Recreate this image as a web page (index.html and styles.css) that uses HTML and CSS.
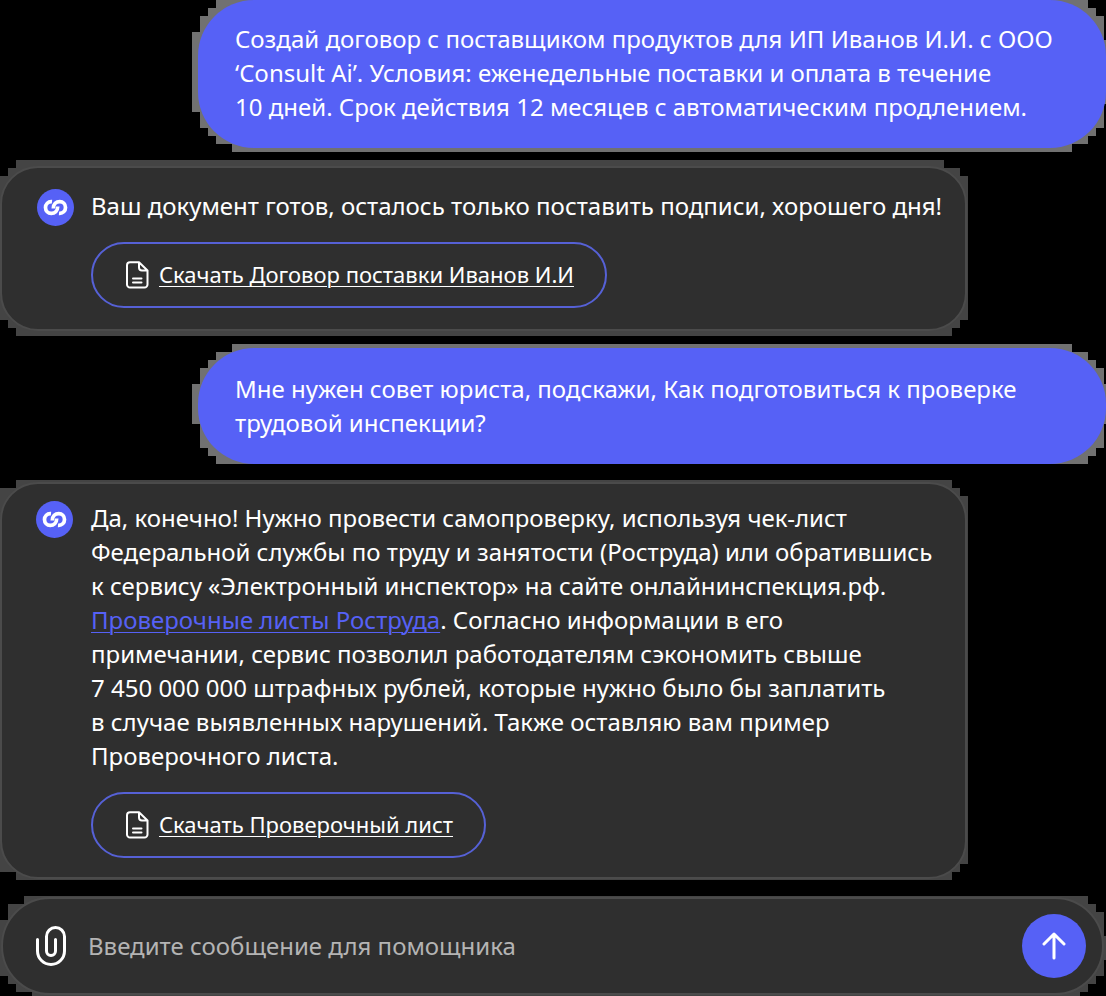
FILE: index.html
```html
<!DOCTYPE html>
<html lang="ru">
<head>
<meta charset="utf-8">
<meta name="viewport" content="width=device-width, initial-scale=1">
<title>Помощник</title>
<link rel="stylesheet" href="styles.css">
</head>
<body>
<svg class="sprite" aria-hidden="true">
  <symbol id="logo" viewBox="0 0 37 37">
    <circle cx="18.5" cy="18.5" r="18.5" fill="#5661f6"/>
    <g fill="none" stroke="#fff" stroke-width="3.7">
      <path d="M15 12.700C11 12.300 8.500 15.200 8.500 18.600C8.500 22 11 24.400 14.200 24.400C17.800 24.400 20.700 22 20.700 17.500"/>
      <path d="M22 24.300C26 24.700 28.500 21.800 28.500 18.400C28.500 15 26 12.600 22.800 12.600C19.200 12.600 16.300 15 16.300 19.500"/>
    </g>
  </symbol>
  <symbol id="file" viewBox="0 0 24 28">
    <g fill="none" stroke="#fff" stroke-width="2" stroke-linecap="round" stroke-linejoin="round">
      <path d="M14 1.200H5A3 3 0 0 0 2 4.200V23.500A3 3 0 0 0 5 26.500H19.500A3 3 0 0 0 22.500 23.500V9.500ZM14 1.200V6.500A3 3 0 0 0 17 9.500H22.500M8 17.500H16.500M8 21.500H16.500"/>
    </g>
  </symbol>
</svg>
<main class="chat">
  <section class="message message-user message-first">
    <p class="bubble">Создай договор с поставщиком продуктов для ИП Иванов И.И. с ООО<br>‘Consult Ai’. Условия: еженедельные поставки и оплата в течение<br>10 дней. Срок действия 12 месяцев с автоматическим продлением.</p>
  </section>

  <section class="message message-bot message-short">
    <div class="card">
      <svg class="avatar" aria-hidden="true"><use href="#logo"/></svg>
      <div class="card-body">
        <p class="text">Ваш документ готов, осталось только поставить подписи, хорошего дня!</p>
        <a class="download" href="#contract"><svg class="file-icon" aria-hidden="true"><use href="#file"/></svg><span class="download-label">Скачать Договор поставки Иванов И.И</span></a>
      </div>
    </div>
  </section>

  <section class="message message-user message-second">
    <p class="bubble">Мне нужен совет юриста, подскажи, Как подготовиться к проверке<br>трудовой инспекции?</p>
  </section>

  <section class="message message-bot message-long">
    <div class="card">
      <svg class="avatar" aria-hidden="true"><use href="#logo"/></svg>
      <div class="card-body">
        <p class="text">Да, конечно! Нужно провести самопроверку, используя чек-лист<br>Федеральной службы по труду и занятости (Роструда) или обратившись<br>к сервису «Электронный инспектор» на сайте онлайнинспекция.рф.<br><a class="link" href="#lists">Проверочные листы Роструда</a>. Согласно информации в его<br>примечании, сервис позволил работодателям сэкономить свыше<br>7 450 000 000 штрафных рублей, которые нужно было бы заплатить<br>в случае выявленных нарушений. Также оставляю вам пример<br>Проверочного листа.</p>
        <a class="download" href="#checklist"><svg class="file-icon" aria-hidden="true"><use href="#file"/></svg><span class="download-label">Скачать Проверочный лист</span></a>
      </div>
    </div>
  </section>

  <form class="composer">
    <div class="composer-bar">
      <button class="attach" type="button" aria-label="Прикрепить файл">
        <svg class="attach-icon" viewBox="0 0 30 40" aria-hidden="true"><path d="M1.500 13.500V25A13.500 13.500 0 0 0 28.500 25V10.500A9 9 0 0 0 10.500 10.500V25A4.500 4.500 0 0 0 19.500 25V13.500" fill="none" stroke="#fff" stroke-width="3" stroke-linecap="round"/></svg>
      </button>
      <input class="field" type="text" placeholder="Введите сообщение для помощника" aria-label="Сообщение">
      <button class="send" type="submit" aria-label="Отправить">
        <svg class="send-icon" viewBox="0 0 24 28" aria-hidden="true"><path d="M12 26V2M2 12L12 2L22 12" fill="none" stroke="#fff" stroke-width="3" stroke-linecap="round" stroke-linejoin="round"/></svg>
      </button>
    </div>
  </form>
</main>
</body>
</html>
```
FILE: styles.css
```css
* { box-sizing: border-box; }

body {
  margin: 0;
  background: #000;
  color: #fff;
  font-family: "Noto Sans", sans-serif;
  font-size: 24px;
  line-height: 34px;
}

p { margin: 0; }

.sprite { position: absolute; width: 0; height: 0; }

.chat { display: flex; flex-direction: column; }

.message, .composer { position: relative; }

/* Stepped backing behind every rounded block */
.message::before, .composer::before {
  content: "";
  position: absolute;
  inset: 0;
  z-index: -1;
  background: #444;
}

.message-user {
  width: calc(100% - 192px);
  align-self: flex-end;
  padding-left: 6px;
}
.message-user::before { background: #717171; }

.bubble {
  padding: 22px 37px 24px;
  border-radius: 56px;
  background: #5661f6;
  white-space: nowrap;
}

.message-first { padding-bottom: 4px; margin-bottom: 8px; }
.message-first::before {
  clip-path: polygon(
    24px 0, calc(100% - 18px) 0, calc(100% - 18px) 8px, calc(100% - 10px) 8px, calc(100% - 10px) 16px,
    calc(100% - 2px) 16px, calc(100% - 2px) 40px, 100% 40px, 100% calc(100% - 48px),
    calc(100% - 2px) calc(100% - 48px), calc(100% - 2px) calc(100% - 24px),
    calc(100% - 10px) calc(100% - 24px), calc(100% - 10px) calc(100% - 16px),
    calc(100% - 18px) calc(100% - 16px), calc(100% - 18px) calc(100% - 8px),
    calc(100% - 34px) calc(100% - 8px), calc(100% - 34px) 100%,
    40px 100%, 40px calc(100% - 8px), 24px calc(100% - 8px), 24px calc(100% - 16px),
    16px calc(100% - 16px), 16px calc(100% - 24px), 8px calc(100% - 24px), 8px calc(100% - 40px),
    0 calc(100% - 40px), 0 32px, 8px 32px, 8px 16px, 16px 16px, 16px 8px, 24px 8px);
}

.message-second { padding-top: 4px; margin: 8px 0 16px; }
.message-second .bubble { padding: 24px 37px; }
.message-second::before {
  clip-path: polygon(
    40px 0, calc(100% - 34px) 0, calc(100% - 34px) 8px, calc(100% - 18px) 8px, calc(100% - 18px) 16px,
    calc(100% - 10px) 16px, calc(100% - 10px) 24px, calc(100% - 2px) 24px, calc(100% - 2px) 40px,
    100% 40px, 100% calc(100% - 40px), calc(100% - 2px) calc(100% - 40px),
    calc(100% - 2px) calc(100% - 16px), calc(100% - 10px) calc(100% - 16px),
    calc(100% - 10px) calc(100% - 8px), calc(100% - 18px) calc(100% - 8px), calc(100% - 18px) 100%,
    24px 100%, 24px calc(100% - 8px), 16px calc(100% - 8px), 16px calc(100% - 16px),
    8px calc(100% - 16px), 8px calc(100% - 40px), 0 calc(100% - 40px),
    0 40px, 8px 40px, 8px 24px, 16px 24px, 16px 16px, 24px 16px, 24px 8px, 40px 8px);
}

.message-bot { width: calc(100% - 138px); padding-right: 1px; }

.card {
  display: flex;
  align-items: flex-start;
  gap: 17px;
  padding: 21px 35px;
  border: 2px solid #4b4b4b;
  border-radius: 38px;
  background: #2f2f2f;
}

.message-short { padding-top: 6px; padding-bottom: 5px; }
.message-short::before {
  clip-path: polygon(
    16px 0, calc(100% - 24px) 0, calc(100% - 24px) 8px, calc(100% - 8px) 8px, calc(100% - 8px) 16px,
    100% 16px, 100% calc(100% - 16px), calc(100% - 8px) calc(100% - 16px),
    calc(100% - 8px) calc(100% - 8px), calc(100% - 16px) calc(100% - 8px), calc(100% - 16px) 100%,
    16px 100%, 16px calc(100% - 8px), 8px calc(100% - 8px), 8px calc(100% - 16px),
    0 calc(100% - 16px), 0 16px, 8px 16px, 8px 8px, 16px 8px);
}

.message-long { padding-top: 2px; padding-bottom: 1px; margin-bottom: 16px; }
.message-long .card { gap: 18px; padding: 17px 34px 19px; }
.message-long::before {
  clip-path: polygon(
    16px 0, calc(100% - 16px) 0, calc(100% - 16px) 8px, calc(100% - 8px) 8px, calc(100% - 8px) 16px,
    100% 16px, 100% calc(100% - 16px), calc(100% - 8px) calc(100% - 16px),
    calc(100% - 8px) calc(100% - 8px), calc(100% - 16px) calc(100% - 8px), calc(100% - 16px) 100%,
    16px 100%, 16px calc(100% - 8px), 0 calc(100% - 8px), 0 8px, 16px 8px);
}

.avatar { flex: none; width: 37px; height: 37px; }

.card-body {
  display: flex;
  flex-direction: column;
  align-items: flex-start;
  gap: 19px;
}

.text { white-space: nowrap; }

.link {
  color: #5661f6;
  text-decoration-thickness: 1px;
  text-underline-offset: 3px;
}

.download {
  display: flex;
  align-items: center;
  gap: 10px;
  height: 66px;
  padding: 0 31px 0 32px;
  border: 2px solid #5661d6;
  border-radius: 33px;
  color: #fff;
  font-size: 22px;
  text-decoration: none;
  white-space: nowrap;
}

.download-label {
  padding-bottom: 2px;
  text-decoration: underline;
  text-decoration-thickness: 1px;
  text-underline-offset: 3px;
}

.file-icon { flex: none; width: 24px; height: 28px; }

.composer { padding: 1px 2px 1px 1px; }
.composer::before {
  clip-path: polygon(
    24px 0, calc(100% - 18px) 0, calc(100% - 18px) 8px, calc(100% - 10px) 8px, calc(100% - 10px) 16px,
    calc(100% - 2px) 16px, calc(100% - 2px) 40px, 100% 40px, 100% 64px, calc(100% - 2px) 64px,
    calc(100% - 2px) 80px, calc(100% - 10px) 80px, calc(100% - 10px) 88px, calc(100% - 18px) 88px,
    calc(100% - 18px) 96px, calc(100% - 26px) 96px, calc(100% - 26px) 100%,
    32px 100%, 32px 96px, 16px 96px, 16px 88px, 8px 88px, 8px 80px, 0 80px,
    0 24px, 8px 24px, 8px 8px, 24px 8px);
}

.composer-bar {
  display: flex;
  align-items: center;
  gap: 22px;
  padding: 15px 16px 15px 33px;
  border: 2px solid #4b4b4b;
  border-radius: 49px;
  background: #2f2f2f;
}

.attach, .send {
  display: grid;
  place-items: center;
  flex: none;
  padding: 0;
  border: 0;
  background: none;
}

.attach-icon { width: 30px; height: 40px; }

.field {
  flex: 1;
  min-width: 0;
  padding: 0;
  border: 0;
  outline: 0;
  background: none;
  color: #fff;
  font: inherit;
}
.field::placeholder { color: #b4b4b4; opacity: 1; }

.send {
  width: 64px;
  height: 64px;
  border-radius: 50%;
  background: #5661f6;
}

.send-icon { width: 24px; height: 28px; }
```
